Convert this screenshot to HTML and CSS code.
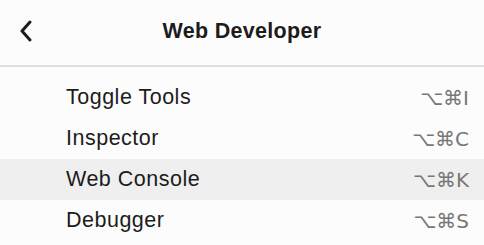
FILE: index.html
```html
<!DOCTYPE html>
<html lang="en">
  <head>
    <meta charset="UTF-8" />
    <title>Web Developer</title>
    <link rel="stylesheet" href="styles.css">
  </head>
  <body>
    <div class="panel">
      <div class="header">
        <button class="back" aria-label="Back">
          <svg width="14" height="22" viewBox="0 0 14 22">
            <path d="M11 2 L3 11 L11 20" fill="none" stroke="#1c1c1c" stroke-width="3" stroke-linecap="round" stroke-linejoin="round" />
          </svg>
        </button>
        <h2>Web Developer</h2>
      </div>
      <ul class="menu">
        <li class="item"><span class="label">Toggle Tools</span><span class="key">⌥⌘I</span></li>
        <li class="item"><span class="label">Inspector</span><span class="key">⌥⌘C</span></li>
        <li class="item active"><span class="label">Web Console</span><span class="key">⌥⌘K</span></li>
        <li class="item"><span class="label">Debugger</span><span class="key">⌥⌘S</span></li>
      </ul>
    </div>
  </body>
</html>
```

FILE: styles.css
```css
* {
  margin: 0;
  padding: 0;
  box-sizing: border-box;
}

body {
  background: #fcfcfc;
  font-family: "Liberation Sans", Arial, sans-serif;
  color: #1c1c1c;
}

.panel {
  width: 484px;
  height: 245px;
  overflow: hidden;
}

.header {
  height: 67px;
  display: flex;
  align-items: center;
  justify-content: center;
  position: relative;
  border-bottom: 2px solid #dedede;
  padding-bottom: 2px;
}

.header h2 {
  font-size: 21.5px;
  font-weight: bold;
  letter-spacing: 0.3px;
}

.back {
  position: absolute;
  left: 19px;
  top: 20px;
  border: none;
  background: none;
  display: flex;
}

.menu {
  list-style: none;
  padding-top: 10px;
}

.item {
  height: 41px;
  display: flex;
  align-items: center;
  justify-content: space-between;
  padding: 0 15px 0 66px;
  font-size: 21.5px;
  letter-spacing: 0.5px;
}

.item.active {
  background: #efefef;
}

.key {
  color: #777;
  font-family: "DejaVu Sans", sans-serif;
  font-size: 20px;
  letter-spacing: 0;
}
```
